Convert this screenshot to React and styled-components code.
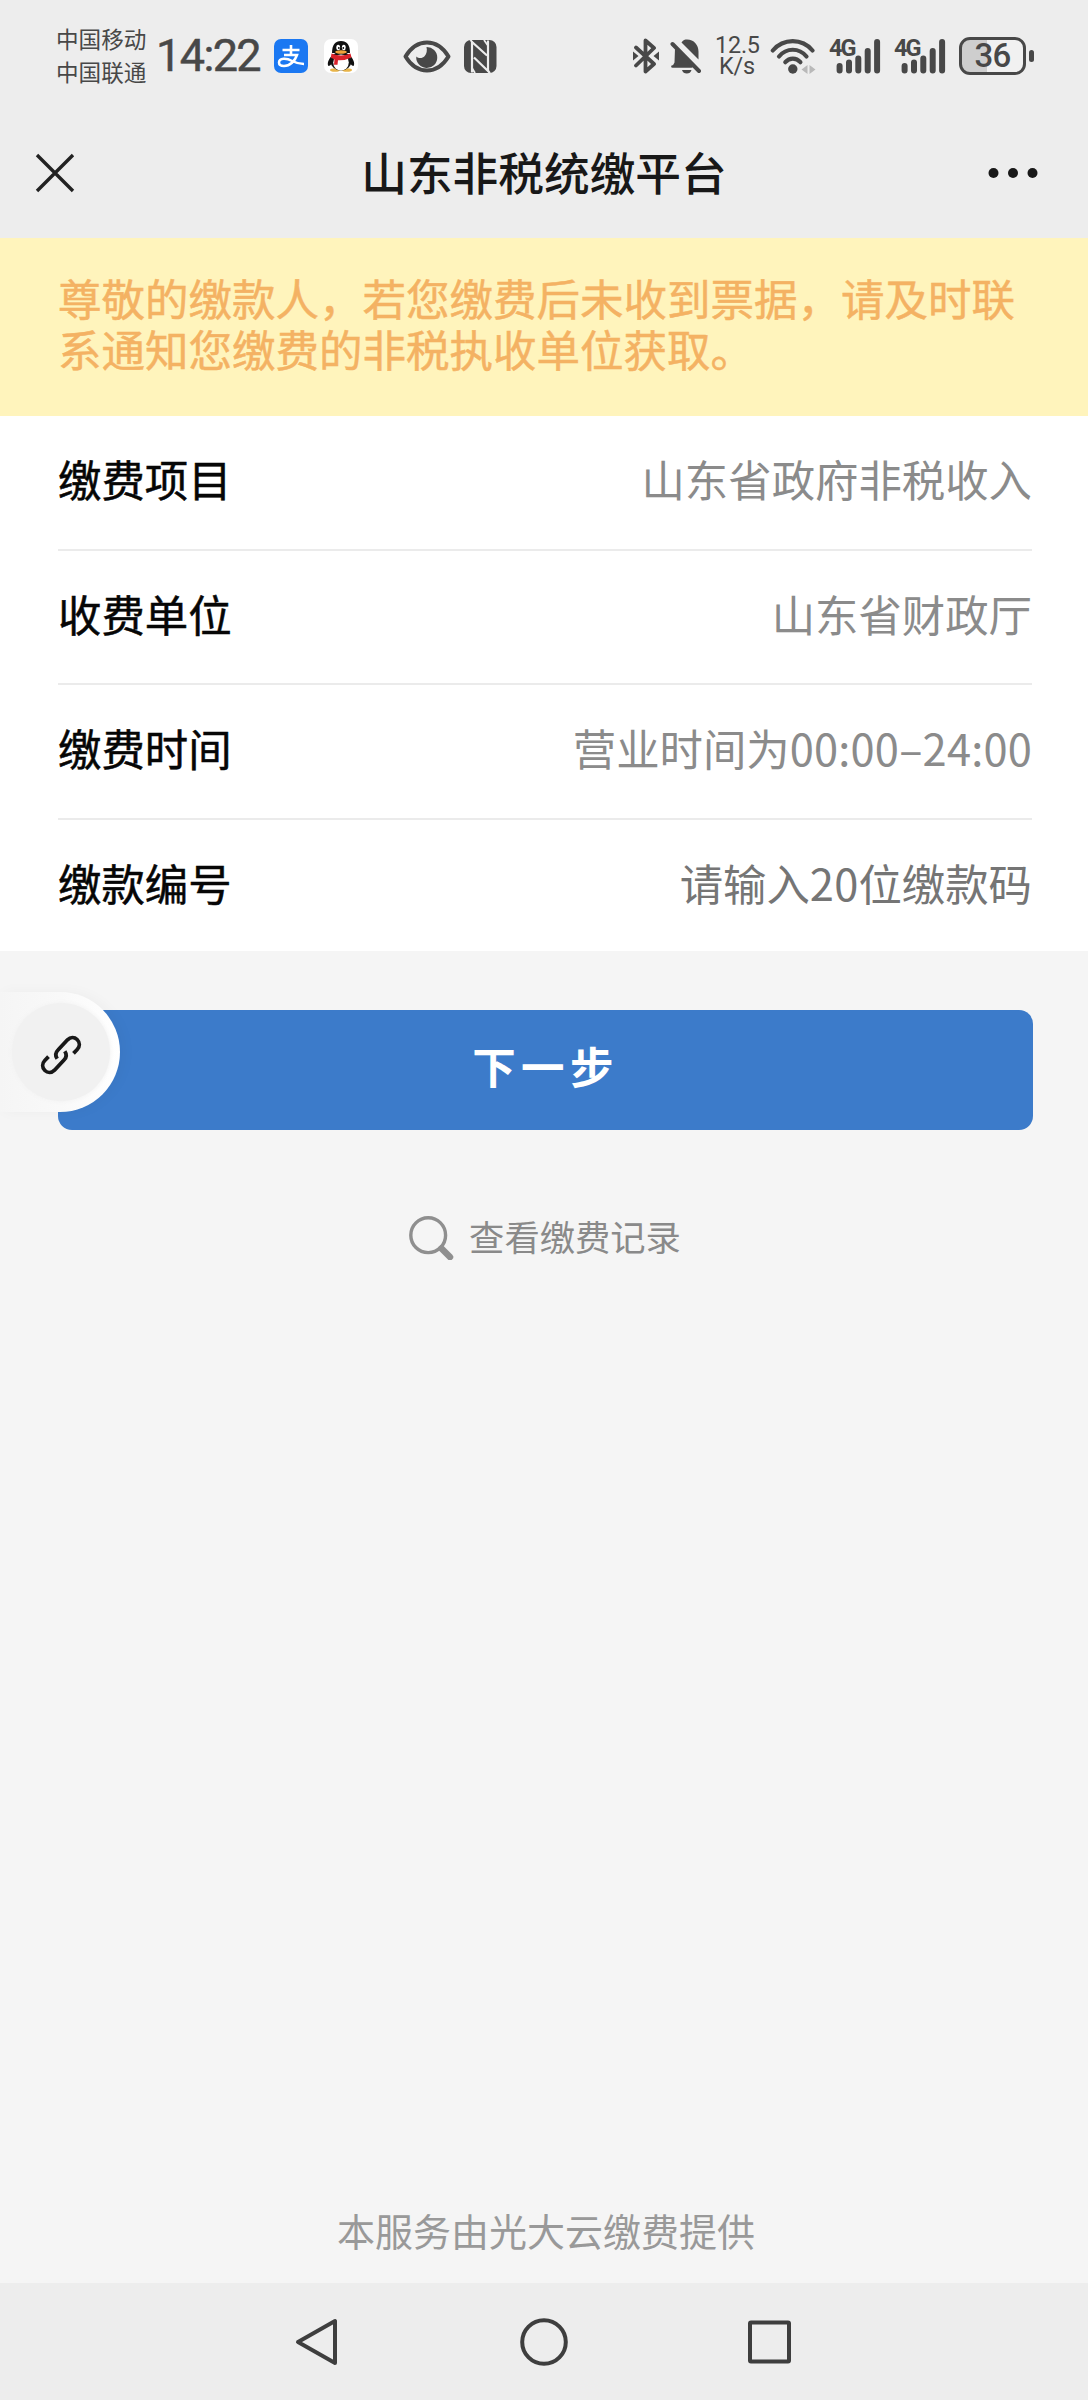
import React from "react";
import styled, { createGlobalStyle } from "styled-components";

const GlobalStyle = createGlobalStyle`
  * {
    box-sizing: border-box;
  }
  body {
    margin: 0;
    background: #f5f5f5;
    font-family: "Noto Sans CJK SC", "Noto Sans", sans-serif;
  }
  svg {
    display: block;
    flex: none;
  }
`;

const Page = styled.div`
  display: flex;
  flex-direction: column;
  width: 1088px;
  height: 2400px;
  overflow: hidden;
`;

// status bar
const StatusBar = styled.div`
  display: flex;
  align-items: center;
  justify-content: space-between;
  height: 112px;
  padding: 0 54px 0 56px;
  background: #ededed;
  color: #484848;
`;

const StatusGroup = styled.div`
  display: flex;
  align-items: center;
`;

const Carriers = styled.div`
  width: 92px;
  padding-bottom: 3px;
  font-size: 22.6px;
  line-height: 33px;
  white-space: nowrap;
`;

const Clock = styled.div`
  width: 106px;
  margin: 0 12px 0 8px;
  padding-bottom: 1px;
  font-family: Roboto, sans-serif;
  font-size: 45px;
  line-height: 60px;
  font-weight: 400;
  letter-spacing: -1.6px;
  -webkit-text-stroke: 0.5px #484848;
  white-space: nowrap;
`;

const AppBadge = styled.div`
  width: 34px;
  height: 34px;
  margin-right: ${(props) => props.$gap}px;
  border-radius: 7px;
  overflow: hidden;
  background: ${(props) => props.$bg};
`;

const IconSlot = styled.div`
  margin-right: ${(props) => props.$gap}px;
`;

const Speed = styled.div`
  width: 44px;
  margin-right: 11px;
  padding-bottom: 0;
  font-family: Roboto, sans-serif;
  font-size: 23.4px;
  line-height: 21.5px;
  letter-spacing: -0.2px;
  text-align: center;
  white-space: nowrap;
`;

const Battery = styled.div`
  display: flex;
  align-items: center;
  justify-content: center;
  width: 67px;
  height: 38px;
  margin-right: 3px;
  border: 3px solid #484848;
  border-radius: 11px;
  background: linear-gradient(to right, #cecece 41%, #f1f1f1 41%);
  font-family: Roboto, sans-serif;
  font-size: 33px;
  line-height: 32px;
  font-weight: 500;
  letter-spacing: -0.8px;
`;

const BatteryTip = styled.div`
  width: 5px;
  height: 12px;
  border-radius: 3px;
  background: #484848;
`;

// title bar
const TitleBar = styled.div`
  display: flex;
  align-items: center;
  justify-content: space-between;
  height: 126px;
  padding: 0 50px 4px 35px;
  background: #ededed;
`;

const Title = styled.h1`
  margin: 0 0 4px 25px;
  color: #181818;
  font-size: 45.7px;
  line-height: 60px;
  font-weight: 500;
`;

const Notice = styled.div`
  height: 178px;
  padding: 34px 58px 0;
  background: #fff4bc;
  color: #f4b263;
  font-size: 43.5px;
  line-height: 51px;
  -webkit-text-stroke: 0.5px #f4b263;
`;

const NoticeLine = styled.div`
  white-space: nowrap;
`;

// form
const Form = styled.div`
  height: 535px;
  padding: 0 56px 0 58px;
  background: #fff;
`;

const Row = styled.div`
  display: flex;
  align-items: center;
  justify-content: space-between;
  height: ${(props) => (props.$last ? 131 : 134.6)}px;
  padding-bottom: ${(props) => (props.$last ? 6 : 8)}px;
  border-bottom: ${(props) => (props.$last ? "none" : "2px solid #ebebeb")};
  font-size: 43.4px;
  line-height: 60px;
  white-space: nowrap;
`;

const Label = styled.span`
  color: #060606;
  -webkit-text-stroke: 0.5px #060606;
`;

const Value = styled.span`
  color: ${(props) => (props.$placeholder ? "#757575" : "#8b8b8b")};
`;

const Digits = styled.span`
  letter-spacing: 0.2px;
`;

const Body = styled.div`
  flex: 1;
  display: flex;
  flex-direction: column;
  align-items: center;
  padding-top: 59px;
  background: #f5f5f5;
`;

const ButtonWrap = styled.div`
  position: relative;
  width: 100%;
  padding: 0 55px 0 58px;
`;

const NextButton = styled.button`
  display: block;
  width: 100%;
  height: 120px;
  padding: 0 0 10px 0;
  border: none;
  border-radius: 14px;
  background: #3c7bca;
  color: #fff;
  font-family: inherit;
  font-size: 43.5px;
  font-weight: 700;
  letter-spacing: 5.3px;
`;

const FloatTab = styled.div`
  position: absolute;
  left: 0;
  top: -18px;
  display: flex;
  align-items: center;
  width: 120px;
  height: 120px;
  padding-left: 12px;
  border-radius: 0 60px 60px 0;
  background: linear-gradient(to right, #f5f5f5 0%, #f9f9f9 50%, #ffffff 100%);
  box-shadow: 4px 0 14px rgba(0, 0, 0, 0.035);
`;

const FloatCircle = styled.div`
  display: flex;
  align-items: center;
  justify-content: center;
  width: 98px;
  height: 98px;
  padding-top: 5px;
  border-radius: 50%;
  background: #f1f1f1;
  box-shadow: 0 0 5px #f1f1f1;
`;

const RecordLink = styled.div`
  display: flex;
  align-items: center;
  gap: 15px;
  margin-top: 79px;
  padding-left: 2px;
  color: #8a8a8a;
  font-size: 35.3px;
  line-height: 54px;
`;

const RecordText = styled.span`
  padding-bottom: 4px;
`;

const Provider = styled.div`
  margin: auto 0 26px 4px;
  color: #999;
  font-size: 38px;
  line-height: 54px;
`;

const NavBar = styled.div`
  display: flex;
  align-items: center;
  justify-content: space-between;
  height: 117px;
  padding: 0 294px;
  background: #ededed;
`;

const AlipayLogo = () => (
  <svg width="34" height="34" viewBox="0 0 34 34">
    <g fill="none" stroke="#fff" strokeLinecap="butt">
      <path d="M8.5 11h17M17 6v10" strokeWidth="2.6" />
      <path d="M10 16h13c-2 6-7 11-13 11-3.500 0-5-1.500-5-3.500 0-5 8-4.500 13-1.500 4 2 8 3 12 3" strokeWidth="2.500" />
    </g>
  </svg>
);

const QQLogo = () => (
  <svg width="34" height="34" viewBox="0 0 34 34">
    <ellipse cx="11" cy="31" rx="5" ry="1.800" fill="#e9b54a" />
    <ellipse cx="23" cy="31" rx="5" ry="1.800" fill="#e9b54a" />
    <path d="M7.500 17C4 21 3 25 4.500 27c1 0 2-1 3-2zM26.500 17c3.500 4 4.500 8 3 10-1 0-2-1-3-2z" fill="#111" />
    <ellipse cx="17" cy="22" rx="10.500" ry="9.500" fill="#111" />
    <ellipse cx="17" cy="23.500" rx="7.800" ry="8" fill="#fff" />
    <path d="M8 14C8 6 11 2 17 2s9 4 9 12z" fill="#111" />
    <ellipse cx="14.200" cy="8.500" rx="1.900" ry="2.800" fill="#fff" />
    <ellipse cx="19.800" cy="8.500" rx="1.900" ry="2.800" fill="#fff" />
    <circle cx="14.800" cy="9" r="0.900" fill="#111" />
    <circle cx="19.300" cy="9" r="0.900" fill="#111" />
    <ellipse cx="17" cy="13" rx="5.800" ry="1.700" fill="#f0a33a" />
    <path d="M7.500 14.500q9.500 4 19 0l1 4q-6.500 3.200-13.500 2.800l-.5 4.500h-3.500l.5-5.200-3.700-2z" fill="#d9222a" />
  </svg>
);

const EyeIcon = () => (
  <svg width="48" height="33" viewBox="0 0 48 33">
    <path d="M2.500 16.500C8 7.500 15 2.500 24 2.500s16 5 21.500 14C40 25.500 33 30.500 24 30.500S8 25.500 2.500 16.500z" fill="none" stroke="#484848" strokeWidth="4" strokeLinejoin="round" />
    <path d="M23.500 7a10.500 10.500 0 1 1-10.200 9.500c2.500 2.300 6.200 1.900 8.200-.2 2.300-2.500 2.800-6 2-9.300z" fill="#484848" />
  </svg>
);

const NfcIcon = () => (
  <svg width="33" height="33" viewBox="0 0 33 33">
    <rect width="32.500" height="33" rx="7" fill="#484848" />
    <path d="M8 32.500V2l15 13.500M24 .5v30.500L10 17.500" fill="none" stroke="#ededed" strokeWidth="2.200" />
    <path d="M6.500 0l3 4M20 0l3.500 5M11 33l-3-5M26 33l-3-4" stroke="#ededed" strokeWidth="1.800" />
  </svg>
);

const BluetoothIcon = () => (
  <svg width="26" height="36" viewBox="0 0 26 36">
    <path d="M3 9.500L21 26l-8.500 7.500v-31L21 10 3 27.500" fill="none" stroke="#484848" strokeWidth="3.800" strokeLinecap="round" strokeLinejoin="round" />
    <path d="M0 13.500v9l5.500-4.500zM26 13.500v9L20.500 18z" fill="#484848" />
  </svg>
);

const BellOffIcon = () => (
  <svg width="32" height="36" viewBox="0 0 32 36">
    <path d="M11.500 4.500C13 2 15 1.500 17 1.500c7 0 11.500 5.500 11.500 12.500v7.500z" fill="#484848" />
    <path d="M5 10.500L24 29H2l2.500-4.500z" fill="#484848" />
    <path d="M2.500 6L29 33" stroke="#484848" strokeWidth="4" strokeLinecap="round" />
    <path d="M2.500 28.500h19" stroke="#484848" strokeWidth="2.600" strokeLinecap="round" />
    <path d="M12 32h9.500q-1 3.500-4.700 3.500T12 32z" fill="#484848" />
  </svg>
);

const WifiIcon = () => (
  <svg width="46" height="36" viewBox="0 0 46 36">
    <g fill="none" stroke="#484848" strokeWidth="4.200" strokeLinecap="round">
      <path d="M2.800 12.500C13.500.1 32 .1 42.500 12.500" />
      <path d="M9 18.500c7.500-9 20-9 27.500 0" />
      <path d="M15.300 24.200c4.200-4.800 10.900-4.800 15.100 0" />
    </g>
    <circle cx="22.800" cy="31" r="4.700" fill="#484848" />
    <path d="M37.500 27v9l-6-4.500zM39.500 27v9l6-4.500z" fill="#b9b9b9" />
  </svg>
);

const SignalBox = styled.div`
  position: relative;
  width: 52px;
  height: 36px;
  margin-right: ${(props) => props.$gap}px;
`;

const NetType = styled.span`
  position: absolute;
  left: 0;
  top: 1px;
  font-family: Roboto, sans-serif;
  font-size: 23.5px;
  line-height: 18px;
  font-weight: 700;
  letter-spacing: -2px;
`;

const Signal = ({ gap }) => (
  <SignalBox $gap={gap}>
    <NetType>4G</NetType>
    <svg width="52" height="36" viewBox="0 0 52 36">
      <path d="M10.600 28v4.500M20 24.500v8M29.300 20.500v12M38.700 13v19.500M48.100 4v28.500" stroke="#484848" strokeWidth="6" strokeLinecap="round" />
    </svg>
  </SignalBox>
);

const CloseIcon = () => (
  <svg width="40" height="40" viewBox="0 0 40 40">
    <path d="M2 2l36 36M38 2L2 38" stroke="#222" strokeWidth="3.400" />
  </svg>
);

const MoreIcon = () => (
  <svg width="50" height="12" viewBox="0 0 50 12">
    <circle cx="5.500" cy="6" r="5" fill="#181818" />
    <circle cx="25" cy="6" r="5" fill="#181818" />
    <circle cx="44.500" cy="6" r="5" fill="#181818" />
  </svg>
);

const LinkIcon = () => (
  <svg width="42" height="42" viewBox="0 0 42 42">
    <g fill="none" stroke="#181818" strokeWidth="3.800">
      <path d="M17.200 24.800c-2-3-1.700-6.300.8-8.800l9.500-10.200c3-3 7-2.800 9.600-.3 3 3 2.800 7.200.1 10l-3.700 3.800" />
      <path d="M24.800 17.200c2 3 1.700 6.300-.8 8.800l-9.500 10.200c-3 3-7 2.800-9.600.3-3-3-2.800-7.200-.1-10l3.700-3.800" />
    </g>
  </svg>
);

const SearchIcon = () => (
  <svg width="45" height="44" viewBox="0 0 45 44">
    <circle cx="19.200" cy="19.200" r="17.400" fill="none" stroke="#8f8f8f" strokeWidth="3.400" />
    <path d="M32.500 32.500l8.500 8.500" stroke="#8f8f8f" strokeWidth="6.500" strokeLinecap="round" />
  </svg>
);

const NavIcon = ({ children }) => (
  <svg width="50" height="50" viewBox="0 0 50 50" fill="none" stroke="#3e3e3e" strokeWidth="4" strokeLinejoin="round">
    {children}
  </svg>
);

const rows = [
  { label: "缴费项目", value: "山东省政府非税收入" },
  { label: "收费单位", value: "山东省财政厅" },
  { label: "缴费时间", value: <>营业时间为<Digits>00:00–24:00</Digits></> },
  { label: "缴款编号", value: <>请输入<Digits>20</Digits>位缴款码</>, placeholder: true },
];

const App = () => {
  return (
    <Page>
      <GlobalStyle />
      <StatusBar>
        <StatusGroup>
          <Carriers>
            <div>中国移动</div>
            <div>中国联通</div>
          </Carriers>
          <Clock>14:22</Clock>
          <AppBadge $bg="#1b78f2" $gap={16}><AlipayLogo /></AppBadge>
          <AppBadge $bg="#fff" $gap={45}><QQLogo /></AppBadge>
          <IconSlot $gap={13}><EyeIcon /></IconSlot>
          <NfcIcon />
        </StatusGroup>
        <StatusGroup>
          <IconSlot $gap={11}><BluetoothIcon /></IconSlot>
          <IconSlot $gap={13}><BellOffIcon /></IconSlot>
          <Speed>
            <div>12.5</div>
            <div>K/s</div>
          </Speed>
          <IconSlot $gap={13}><WifiIcon /></IconSlot>
          <Signal gap={13} />
          <Signal gap={13} />
          <Battery>36</Battery>
          <BatteryTip />
        </StatusGroup>
      </StatusBar>

      <TitleBar>
        <CloseIcon />
        <Title>山东非税统缴平台</Title>
        <MoreIcon />
      </TitleBar>

      <Notice>
        <NoticeLine>尊敬的缴款人，若您缴费后未收到票据，请及时联</NoticeLine>
        <NoticeLine>系通知您缴费的非税执收单位获取。</NoticeLine>
      </Notice>

      <Form>
        {rows.map((row, index) => (
          <Row key={row.label} $last={index === rows.length - 1}>
            <Label>{row.label}</Label>
            <Value $placeholder={row.placeholder}>{row.value}</Value>
          </Row>
        ))}
      </Form>

      <Body>
        <ButtonWrap>
          <NextButton>下一步</NextButton>
          <FloatTab>
            <FloatCircle>
              <LinkIcon />
            </FloatCircle>
          </FloatTab>
        </ButtonWrap>
        <RecordLink>
          <SearchIcon />
          <RecordText>查看缴费记录</RecordText>
        </RecordLink>
        <Provider>本服务由光大云缴费提供</Provider>
      </Body>

      <NavBar>
        <NavIcon><path d="M4 25L41 4v42z" /></NavIcon>
        <NavIcon><circle cx="25" cy="25" r="21.800" /></NavIcon>
        <NavIcon><rect x="6" y="5.500" width="39" height="39" rx="1" /></NavIcon>
      </NavBar>
    </Page>
  );
};

export default App;
